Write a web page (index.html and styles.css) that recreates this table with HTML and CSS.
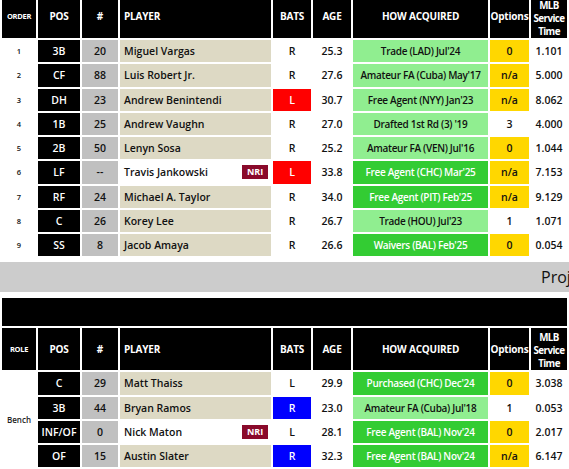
FILE: index.html
```html
<!DOCTYPE html>
<html>
<head>
<meta charset="utf-8">
<link rel="stylesheet" href="styles.css">
</head>
<body>
<table class="roster first">
  <colgroup>
    <col class="c1"><col class="c2"><col class="c3"><col class="c4"><col class="c5"><col class="c6"><col class="c7"><col class="c8"><col class="c9">
  </colgroup>
  <thead>
    <tr class="head">
      <th class="small">ORDER</th><th>POS</th><th>#</th><th class="left">PLAYER</th><th>BATS</th><th>AGE</th><th>HOW ACQUIRED</th><th>Options</th><th class="mlb">MLB Service Time</th>
    </tr>
  </thead>
  <tbody>
    <tr><td class="order">1</td><td class="pos">3B</td><td class="num">20</td><td class="player">Miguel Vargas</td><td class="plain">R</td><td class="plain">25.3</td><td class="lg">Trade (LAD) Jul'24</td><td class="opt">0</td><td class="plain">1.101</td></tr>
    <tr><td class="order">2</td><td class="pos">CF</td><td class="num">88</td><td class="player">Luis Robert Jr.</td><td class="plain">R</td><td class="plain">27.6</td><td class="lg">Amateur FA (Cuba) May'17</td><td class="opt">n/a</td><td class="plain">5.000</td></tr>
    <tr><td class="order">3</td><td class="pos">DH</td><td class="num">23</td><td class="player">Andrew Benintendi</td><td class="bats-l">L</td><td class="plain">30.7</td><td class="lg">Free Agent (NYY) Jan'23</td><td class="opt">n/a</td><td class="plain">8.062</td></tr>
    <tr><td class="order">4</td><td class="pos">1B</td><td class="num">25</td><td class="player">Andrew Vaughn</td><td class="plain">R</td><td class="plain">27.0</td><td class="lg">Drafted 1st Rd (3) '19</td><td class="plain">3</td><td class="plain">4.000</td></tr>
    <tr><td class="order">5</td><td class="pos">2B</td><td class="num">50</td><td class="player">Lenyn Sosa</td><td class="plain">R</td><td class="plain">25.2</td><td class="lg">Amateur FA (VEN) Jul'16</td><td class="opt">0</td><td class="plain">1.044</td></tr>
    <tr><td class="order">6</td><td class="pos">LF</td><td class="num">--</td><td class="player nri"><div class="pl-wrap"><span>Travis Jankowski</span><span class="badge">NRI</span></div></td><td class="bats-l">L</td><td class="plain">33.8</td><td class="dg">Free Agent (CHC) Mar'25</td><td class="opt">n/a</td><td class="plain">7.153</td></tr>
    <tr><td class="order">7</td><td class="pos">RF</td><td class="num">24</td><td class="player">Michael A. Taylor</td><td class="plain">R</td><td class="plain">34.0</td><td class="dg">Free Agent (PIT) Feb'25</td><td class="opt">n/a</td><td class="plain">9.129</td></tr>
    <tr><td class="order">8</td><td class="pos">C</td><td class="num">26</td><td class="player">Korey Lee</td><td class="plain">R</td><td class="plain">26.7</td><td class="lg">Trade (HOU) Jul'23</td><td class="plain">1</td><td class="plain">1.071</td></tr>
    <tr><td class="order">9</td><td class="pos">SS</td><td class="num">8</td><td class="player">Jacob Amaya</td><td class="plain">R</td><td class="plain">26.6</td><td class="dg">Waivers (BAL) Feb'25</td><td class="opt">0</td><td class="plain">0.054</td></tr>
  </tbody>
</table>

<div class="section-bar"><span>Projected Bench</span></div>

<table class="roster second">
  <colgroup>
    <col class="c1"><col class="c2"><col class="c3"><col class="c4"><col class="c5"><col class="c6"><col class="c7"><col class="c8"><col class="c9">
  </colgroup>
  <thead>
    <tr class="title"><th colspan="9"></th></tr>
    <tr class="head">
      <th class="small">ROLE</th><th>POS</th><th>#</th><th class="left">PLAYER</th><th>BATS</th><th>AGE</th><th>HOW ACQUIRED</th><th>Options</th><th class="mlb">MLB Service Time</th>
    </tr>
  </thead>
  <tbody>
    <tr><td class="role" rowspan="4">Bench</td><td class="pos">C</td><td class="num">29</td><td class="player">Matt Thaiss</td><td class="plain">L</td><td class="plain">29.9</td><td class="dg">Purchased (CHC) Dec'24</td><td class="opt">0</td><td class="plain">3.038</td></tr>
    <tr><td class="pos">3B</td><td class="num">44</td><td class="player">Bryan Ramos</td><td class="bats-r">R</td><td class="plain">23.0</td><td class="lg">Amateur FA (Cuba) Jul'18</td><td class="plain">1</td><td class="plain">0.053</td></tr>
    <tr><td class="pos">INF/OF</td><td class="num">0</td><td class="player nri"><div class="pl-wrap"><span>Nick Maton</span><span class="badge">NRI</span></div></td><td class="plain">L</td><td class="plain">28.1</td><td class="dg">Free Agent (BAL) Nov'24</td><td class="opt">0</td><td class="plain">2.017</td></tr>
    <tr><td class="pos">OF</td><td class="num">15</td><td class="player">Austin Slater</td><td class="bats-r">R</td><td class="plain">32.3</td><td class="dg">Free Agent (BAL) Nov'24</td><td class="opt">n/a</td><td class="plain">6.147</td></tr>
  </tbody>
</table>
</body>
</html>
```

FILE: styles.css
```css
html, body {
  margin: 0;
  padding: 0;
  background: #ffffff;
  overflow: hidden;
}

body {
  font-family: "Open Sans", "Noto Sans", "DejaVu Sans", sans-serif;
  color: #111;
}

.roster {
  width: 569px;
  table-layout: fixed;
  border-collapse: separate;
  border-spacing: 2px;
}

.first {
  margin-top: -6px;
}

.second {
  margin-top: 4px;
}

.c1 { width: 34px; }
.c2 { width: 42px; }
.c3 { width: 36px; }
.c4 { width: 151px; }
.c5 { width: 38px; }
.c6 { width: 38px; }
.c7 { width: 135px; }
.c8 { width: 39px; }
.c9 { width: 36px; }

th, td {
  padding: 0;
  text-align: center;
  vertical-align: middle;
  white-space: nowrap;
}

.head th {
  background: #000;
  color: #fff;
  font-size: 10px;
  font-weight: 700;
  line-height: 13.5px;
  height: 42px;
  letter-spacing: -0.2px;
}

.head th.mlb {
  white-space: normal;
  font-size: 9.8px;
  letter-spacing: -0.6px;
  line-height: 13px;
  height: 39px;
  padding-top: 3px;
}

.head th.small {
  font-size: 7.5px;
  letter-spacing: -0.3px;
}

.head th.left {
  text-align: left;
  padding-left: 4px;
}

.title th {
  background: #000;
  height: 28px;
}

tbody td {
  height: 22.25px;
  font-size: 10.5px;
  font-weight: 600;
  line-height: 14px;
  color: #111;
}

.order {
  background: #fff;
  font-size: 7.5px;
}

.role {
  background: #fff;
  font-size: 8px;
  font-weight: 600;
  color: #222;
}

tbody td.pos {
  background: #000;
  color: #fff;
}

.num {
  background: #c0c0c0;
}

.player {
  background: #ddd9c4;
  text-align: left;
  padding-left: 4px;
}

.player.nri {
  background: #fff;
  padding-right: 3px;
}

.pl-wrap {
  display: flex;
  align-items: center;
  justify-content: space-between;
}

.badge {
  display: inline-block;
  background: #8a0a2b;
  color: #fff;
  font-size: 9px;
  font-weight: 700;
  line-height: 14px;
  width: 26px;
  text-align: center;
}

.plain {
  background: #fff;
}

tbody td.bats-l {
  background: #ff0000;
  color: #fff;
}

tbody td.bats-r {
  background: #0000ff;
  color: #fff;
}

tbody td.lg {
  background: #90ee90;
  font-size: 10px;
  letter-spacing: -0.3px;
}

tbody td.dg {
  background: #33cc33;
  color: #fff;
  font-size: 10px;
  letter-spacing: -0.3px;
}

.opt {
  background: #ffd700;
}

.section-bar {
  margin-top: 4px;
  height: 30px;
  background: #cccccc;
  overflow: hidden;
  white-space: nowrap;
  display: flex;
  align-items: center;
  padding-left: 541px;
  font-size: 16px;
  color: #111;
}
```
